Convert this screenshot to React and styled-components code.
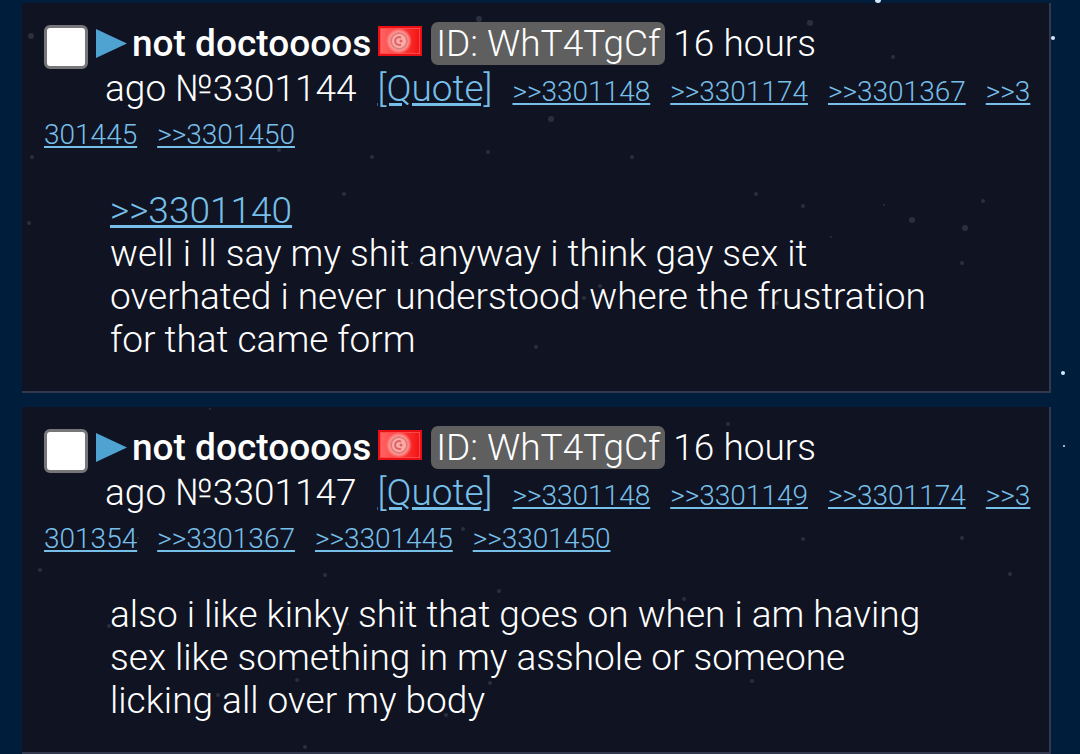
import React from "react";
import styled, { createGlobalStyle } from "styled-components";

const GlobalStyle = createGlobalStyle`
  * { box-sizing: border-box; }
  body {
    margin: 0;
    background: #001e3b;
    color: #fff;
    font: 300 37px/43px Roboto, "Noto Sans", sans-serif;
  }
`;

const Sky = styled.svg`
  position: absolute;
  top: 0;
  left: 0;
  z-index: -1;
`;

const Thread = styled.main`
  display: flex;
  flex-direction: column;
  gap: 14px;
  padding: 3px 29px 0 22px;
`;

const Post = styled.article`
  padding: 19px 10px 30px 22px;
  background: rgba(18, 18, 30, 0.87);
  border: solid #32384e;
  border-width: 0 2px 2px 0;
`;

const Intro = styled.header`
  display: flex;
  align-items: flex-start;
`;

const Tick = styled.input`
  appearance: none;
  flex: none;
  width: 44px;
  height: 44px;
  margin: 3px 8px -2px 0;
  background: #fff;
  border: 3px solid #77777a;
  border-radius: 6px;
`;

const MenuButton = styled.button`
  display: block;
  flex: none;
  padding: 0;
  margin: 7px 5px 0 0;
  border: 0;
  background: none;

  svg { display: block; }
`;

const Name = styled.span`
  font-weight: 500;
`;

const Flag = styled.svg`
  flex: none;
  width: 44px;
  height: 30px;
  margin: 4px 9px 0 7px;
`;

const PosterId = styled.span`
  padding: 0 5px;
  background: #5f5f5f;
  border-radius: 7px;
`;

const Age = styled.time`
  margin-left: 8px;
`;

const Details = styled.div`
  text-indent: 61px;
  word-break: break-all;
`;

const Link = styled.a`
  color: #76bfe9;
  text-decoration: underline;
  text-decoration-thickness: 3px;
  text-underline-offset: 2px;
`;

const QuoteLink = styled(Link)`
  margin-left: 21px;
`;

const BackLink = styled(Link)`
  margin-left: 20px;
  font-size: 28px;
  line-height: 28px;
  text-decoration-thickness: 2px;
`;

const Body = styled.div`
  padding: 36px 96px 0 66px;

  p { margin: 0; }
`;

const stars = [
  [878, 0, 3], [1053, 38, 2], [1063, 373, 2], [1064, 446, 1],
  [31, 36, 3], [479, 19, 3], [810, 23, 3], [893, 57, 2], [551, 119, 3],
  [488, 152, 2], [372, 157, 2], [632, 157, 2], [279, 150, 2], [32, 157, 2],
  [29, 223, 2], [344, 194, 2], [756, 194, 2], [803, 206, 2], [884, 205, 1],
  [983, 201, 2], [912, 220, 3], [965, 228, 3], [831, 237, 1], [962, 263, 2],
  [600, 286, 2], [584, 298, 2], [777, 303, 2], [536, 347, 2], [412, 263, 1],
  [210, 409, 1], [728, 424, 2], [463, 529, 2], [803, 539, 2], [962, 538, 2],
  [325, 575, 2], [1010, 574, 2], [109, 626, 2], [40, 570, 2], [684, 599, 2],
  [499, 591, 2], [348, 624, 1], [297, 680, 2], [218, 695, 2], [490, 683, 2],
  [752, 681, 2], [446, 715, 2], [305, 747, 2], [138, 538, 1],
];

const posts = [
  {
    no: 3301144,
    backlinks: [3301148, 3301174, 3301367, 3301445, 3301450],
    replyTo: 3301140,
    text: "well i ll say my shit anyway i think gay sex it overhated i never understood where the frustration for that came form",
  },
  {
    no: 3301147,
    backlinks: [3301148, 3301149, 3301174, 3301354, 3301367, 3301445, 3301450],
    text: "also i like kinky shit that goes on when i am having sex like something in my asshole or someone licking all over my body",
  },
];

function FlagIcon({ id }) {
  return (
    <Flag viewBox="0 0 44 30" role="img" aria-label="Flag">
      <defs>
        <linearGradient id={id}>
          <stop offset="0" stopColor="#ff6262" />
          <stop offset="0.55" stopColor="#fa3d3d" />
          <stop offset="1" stopColor="#f51414" />
        </linearGradient>
        <radialGradient id={id + "-disc"}>
          <stop offset="0.65" stopColor="#ffaaa4" />
          <stop offset="1" stopColor="#ffaaa4" stopOpacity="0" />
        </radialGradient>
      </defs>
      <rect width="44" height="30" fill="#e80f17" />
      <rect x="3" y="3" width="38" height="24" fill={"url(#" + id + ")"} />
      <rect x="2.5" y="2.5" width="39" height="25" fill="none" stroke="#ff4a48" />
      <circle cx="21" cy="15" r="13" fill={"url(#" + id + "-disc)"} />
      <circle cx="21" cy="15" r="8" fill="none" stroke="#e07c7d" strokeWidth="2" />
      <path d="M23 11.5A4 4 0 1 0 23 18.500" fill="none" stroke="#d9656a" strokeWidth="2" />
      <circle cx="23" cy="15" r="1.5" fill="#d9656a" />
    </Flag>
  );
}

function PostCard({ post }) {
  return (
    <Post id={"p" + post.no}>
      <Intro>
        <Tick type="checkbox" aria-label={"Select post " + post.no} />
        <MenuButton type="button" aria-label="Post menu">
          <svg width="31" height="30" viewBox="0 0 31 30">
            <path d="M0 0L31 14.5L0 29Z" fill="#4fa3d1" />
          </svg>
        </MenuButton>
        <Name>not doctoooos</Name>
        <FlagIcon id={"flag-" + post.no} />
        <PosterId>ID: WhT4TgCf</PosterId>
        <Age>16 hours</Age>
      </Intro>
      <Details>
        {`ago №${post.no}`}
        <QuoteLink href={"#q" + post.no}>[Quote]</QuoteLink>
        {post.backlinks.map((n) => (
          <BackLink key={n} href={"#p" + n}>{`>>${n}`}</BackLink>
        ))}
      </Details>
      <Body>
        {post.replyTo && <Link href={"#p" + post.replyTo}>{`>>${post.replyTo}`}</Link>}
        <p>{post.text}</p>
      </Body>
    </Post>
  );
}

export default function App() {
  return (
    <>
      <GlobalStyle />
      <Sky width="100%" height="754" aria-hidden="true">
        {stars.map(([x, y, r]) => (
          <circle key={x + "-" + y} cx={x} cy={y} r={r} fill="#d5e8ff" />
        ))}
      </Sky>
      <Thread>
        {posts.map((post) => (
          <PostCard key={post.no} post={post} />
        ))}
      </Thread>
    </>
  );
}
